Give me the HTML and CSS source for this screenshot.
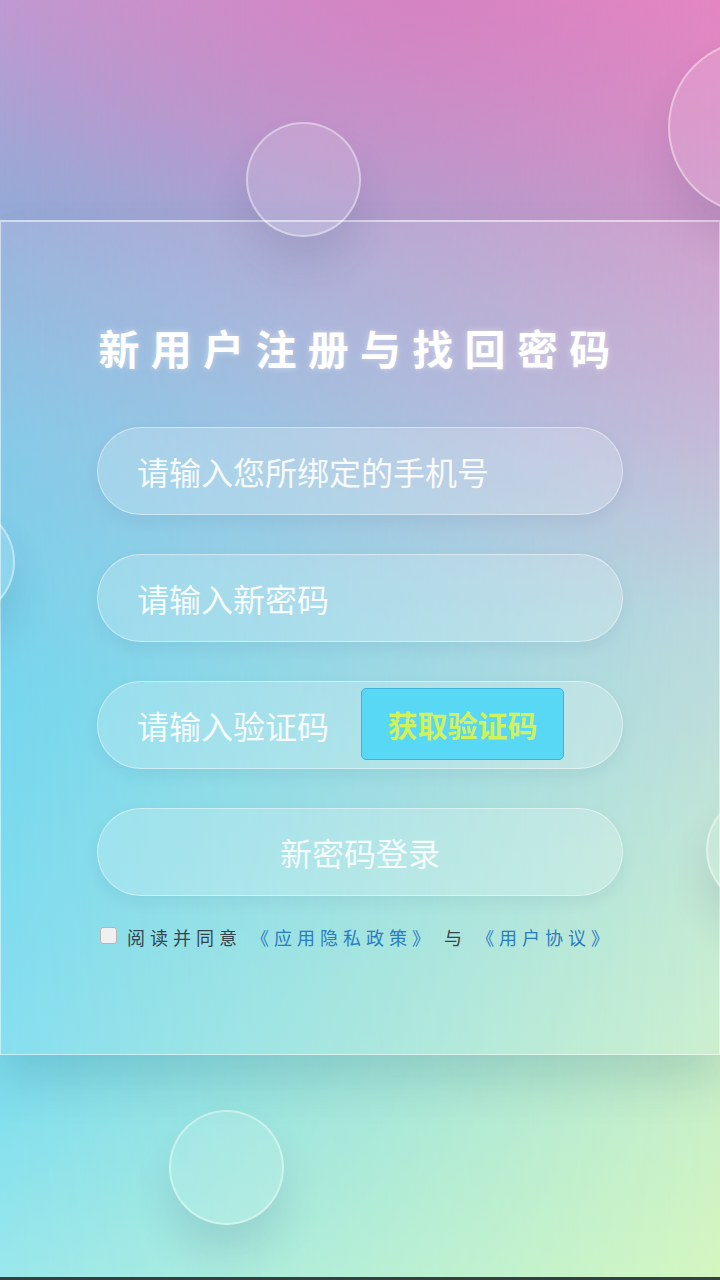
FILE: index.html
```html
<!DOCTYPE html>
<html lang="zh-CN">
<head>
<meta charset="utf-8">
<title>新用户注册与找回密码</title>
<link rel="stylesheet" href="styles.css">
</head>
<body>
<div class="page">
  <span class="bubble bubble-top-right"></span>
  <span class="bubble bubble-top"></span>
  <span class="bubble bubble-left"></span>
  <span class="bubble bubble-right"></span>
  <span class="bubble bubble-bottom"></span>

  <main class="panel">
    <h1 class="title">新用户注册与找回密码</h1>
    <form class="form">
      <input class="field" type="tel" placeholder="请输入您所绑定的手机号">
      <input class="field" type="password" placeholder="请输入新密码">
      <div class="field code-row">
        <input class="code-input" type="text" placeholder="请输入验证码">
        <button class="code-btn" type="button">获取验证码</button>
      </div>
      <button class="field submit" type="button">新密码登录</button>
    </form>
    <label class="agree">
      <input class="agree-box" type="checkbox">
      <span class="agree-text">阅读并同意 <a class="link">《应用隐私政策》</a> 与 <a class="link">《用户协议》</a></span>
    </label>
  </main>
</div>
</body>
</html>
```
FILE: styles.css
```css
html {
  background: #34403f;
}
body {
  margin: 0;
  font-family: "Noto Sans CJK SC", "Noto Sans", sans-serif;
}
.page {
  position: relative;
  height: 1277px;
  overflow: hidden;
  background: linear-gradient(180deg,
    #bd9ed3 0%,
    #96a9d6 16%,
    #7ac4e6 34%,
    #66d3ec 55%,
    #7adcee 82%,
    #9ae8ec 100%);
}
.page::before {
  content: "";
  position: absolute;
  inset: 0;
  background: linear-gradient(180deg,
    #e98ac3 0%,
    #cc94c6 16%,
    #c0afd2 33%,
    #b3d3da 48%,
    #bfe8cf 72%,
    #d4f6c0 100%);
  -webkit-mask-image: linear-gradient(90deg, transparent 0%, #000 100%);
  mask-image: linear-gradient(90deg, transparent 0%, #000 100%);
}
.page::after {
  content: "";
  position: absolute;
  inset: 0;
  background: radial-gradient(ellipse 520px 230px at 58% 0%, rgba(212, 118, 188, 0.55) 0%, rgba(212, 118, 188, 0) 100%);
}
.bubble {
  position: absolute;
  z-index: 2;
  box-sizing: border-box;
  border-radius: 50%;
  border: 2px solid rgba(255, 255, 255, 0.4);
  background: rgba(255, 255, 255, 0.12);
  box-shadow: 0 28px 40px rgba(40, 60, 110, 0.12);
  pointer-events: none;
}
.bubble-top-right { left: 668px; top: 40px; width: 174px; height: 174px; }
.bubble-top { left: 246px; top: 122px; width: 115px; height: 115px; }
.bubble-left { left: -99px; top: 505px; width: 114px; height: 114px; }
.bubble-right { left: 706px; top: 793px; width: 114px; height: 114px; }
.bubble-bottom { left: 169px; top: 1110px; width: 115px; height: 115px; }

.panel {
  position: relative;
  z-index: 1;
  box-sizing: border-box;
  margin-top: 220px;
  height: 835px;
  padding-top: 100px;
  border: 1px solid rgba(255, 255, 255, 0.5);
  border-top: 2px solid rgba(255, 255, 255, 0.55);
  background: rgba(255, 255, 255, 0.1);
  box-shadow: 0 25px 45px rgba(0, 60, 80, 0.14);
}
.title {
  margin: 0;
  text-align: center;
  font-size: 41px;
  line-height: 50px;
  font-weight: 700;
  letter-spacing: 11.3px;
  color: #fff;
  text-shadow: 0 0 6px rgba(255, 255, 255, 0.45);
}
.form {
  width: 526px;
  margin: 55px auto 0;
  display: flex;
  flex-direction: column;
  gap: 39px;
}
.field {
  box-sizing: border-box;
  width: 526px;
  height: 88px;
  margin: 0;
  padding: 0 0 0 39px;
  border-radius: 44px;
  border: 1px solid rgba(255, 255, 255, 0.45);
  background: rgba(255, 255, 255, 0.2);
  box-shadow: 0 6px 16px rgba(0, 40, 80, 0.06);
  font-family: inherit;
  font-size: 32px;
  color: #fff;
  outline: none;
}
.field::placeholder,
.code-input::placeholder {
  color: rgba(255, 255, 255, 0.92);
}
.code-row {
  display: flex;
  align-items: center;
  padding-right: 58px;
}
.code-input {
  flex: 1;
  min-width: 0;
  height: 100%;
  padding: 0;
  border: 0;
  background: transparent;
  font-family: inherit;
  font-size: 32px;
  color: #fff;
  outline: none;
}
.code-btn {
  box-sizing: border-box;
  width: 203px;
  height: 72px;
  margin-top: -3px;
  padding: 0;
  border: 1px solid #3cb2dc;
  border-radius: 5px;
  background: #58d8f4;
  font-family: inherit;
  font-size: 30px;
  font-weight: 700;
  color: #d0f05c;
}
.submit {
  padding: 0;
  text-align: center;
  color: rgba(255, 255, 255, 0.88);
}
.agree {
  width: 526px;
  margin: 29px auto 0;
  display: flex;
  align-items: center;
  gap: 10px;
}
.agree-box {
  appearance: none;
  box-sizing: border-box;
  width: 17px;
  height: 17px;
  margin: -4px 0 0 3px;
  border: 1px solid #b6b6b6;
  border-radius: 3px;
  background: #f0f0f0;
}
.agree-text {
  font-size: 18px;
  line-height: 24px;
  letter-spacing: 5px;
  color: #33454f;
}
.link {
  color: #2a7cc0;
}
```
